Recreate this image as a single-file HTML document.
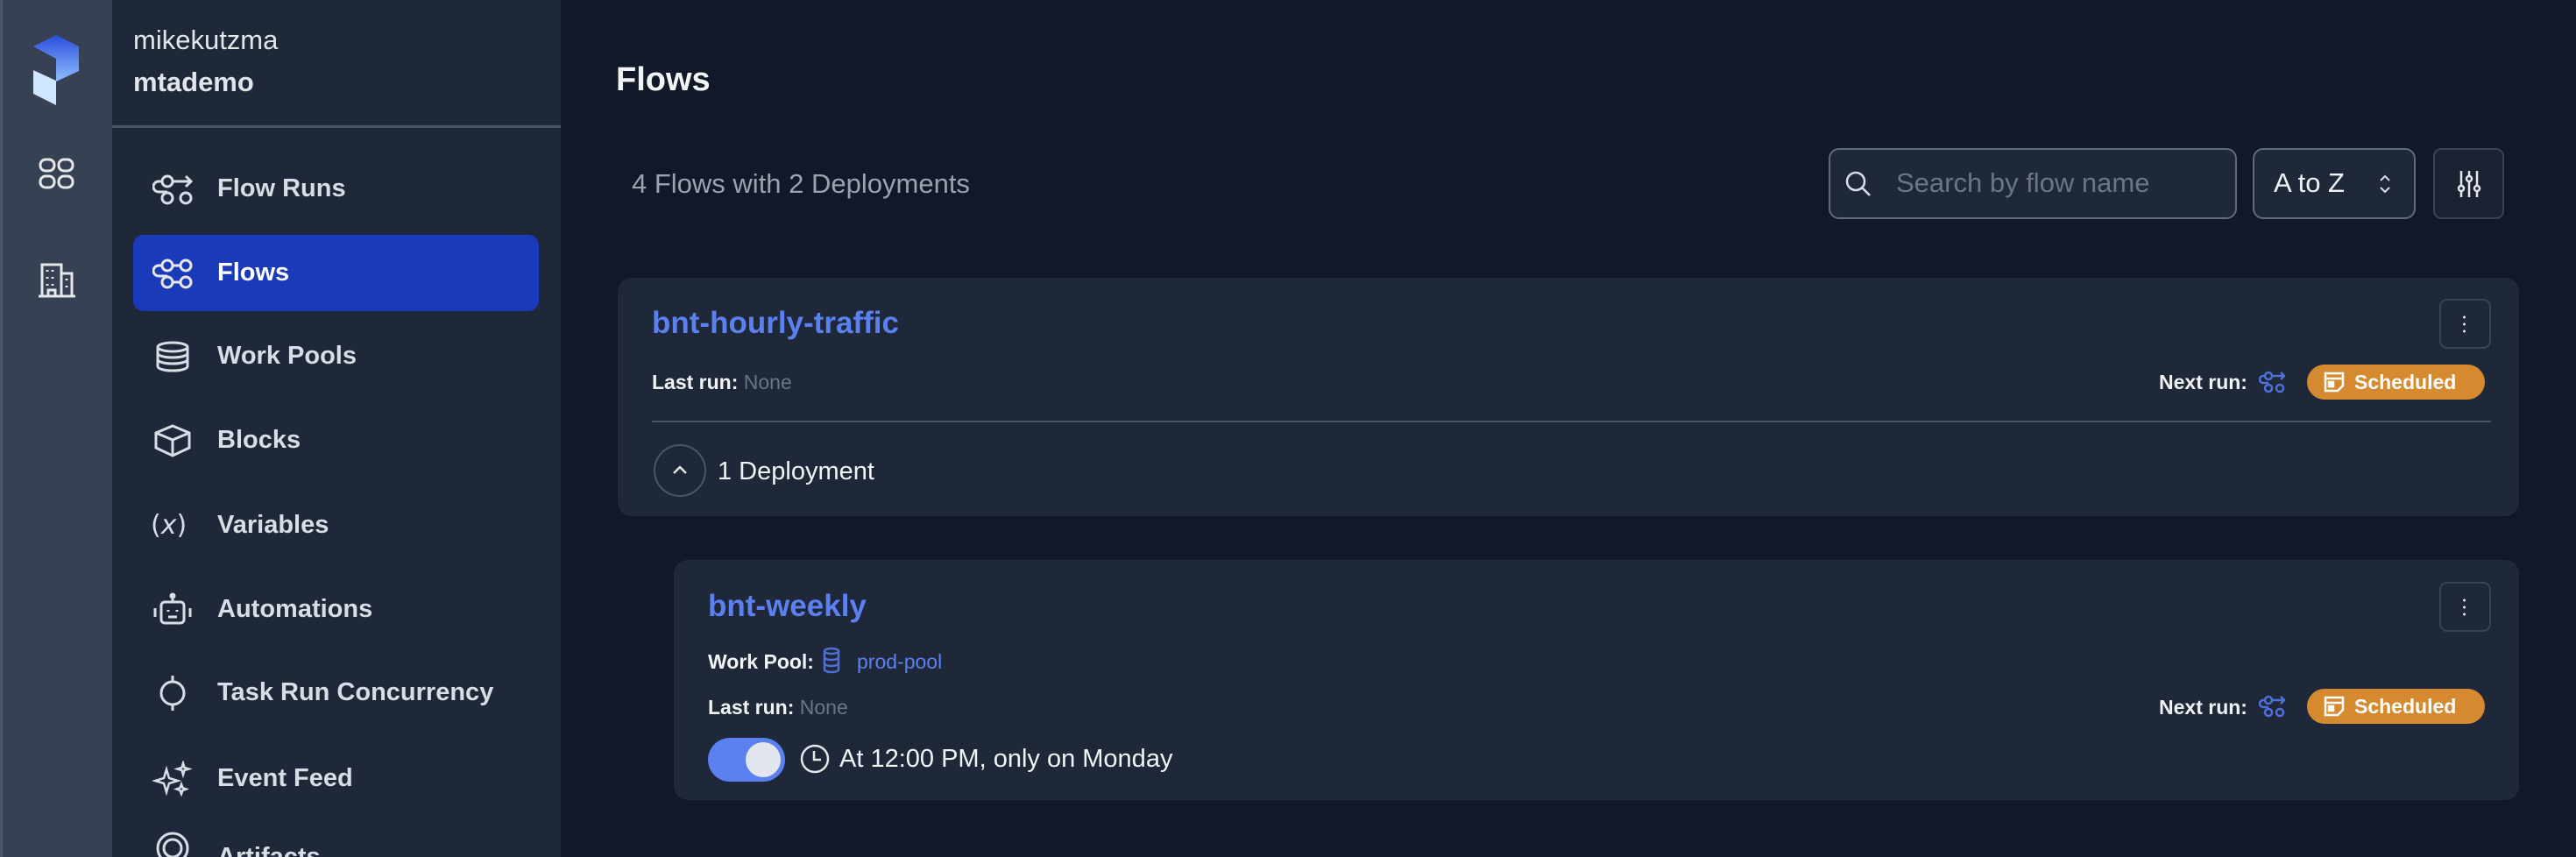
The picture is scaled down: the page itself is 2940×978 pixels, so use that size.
<!DOCTYPE html>
<html><head><meta charset="utf-8"><style>
*{box-sizing:border-box;margin:0;padding:0}
html,body{width:2940px;height:978px;overflow:hidden}
body{background:#111827;font-family:"Liberation Sans",sans-serif;color:#e5e7eb}
#wrap{position:relative;width:2940px;height:978px;overflow:hidden}
.rail{position:absolute;left:0;top:0;width:128px;height:978px;background:#364153;border-left:3px solid #4b5567}
.side{position:absolute;left:128px;top:0;width:512px;height:978px;background:#1f2839}
.abs{position:absolute}
.nav{position:absolute;left:152px;width:463px;height:87px;display:flex;align-items:center;font-size:29px;font-weight:bold;color:#d8dde6}
.nav svg{position:absolute;left:22px}
.nav span{position:absolute;left:96px}
.card{position:absolute;background:#1f2839;border-radius:16px}
.btn{position:absolute;border:2px solid #374357;border-radius:9px}
.badge{position:absolute;background:#d68a30;border-radius:20px;color:#fff;font-weight:bold;font-size:23px;display:flex;align-items:center}
.lbl{font-size:23px;color:#f1f3f6;font-weight:bold}
.muted{color:#6b7585;font-weight:normal}
</style></head><body><div id="wrap">
<div class="rail"></div>
<svg class="abs" style="left:0;top:0" width="128" height="140">
<defs><linearGradient id="g" x1="0" y1="0" x2="0" y2="1"><stop offset="0" stop-color="#2a4fdc"/><stop offset="1" stop-color="#8fbcff"/></linearGradient></defs>
<polygon points="38,53 64,40 90,53 90,81 64,93 64,67" fill="url(#g)"/>
<polygon points="38,80 64,92 64,120 38,107" fill="#cfe6ff"/>
</svg>
<svg class="abs" style="left:44px;top:180px" width="42" height="38" fill="none" stroke="#e5e7eb" stroke-width="3"><rect x="2" y="2" width="16" height="13" rx="6"/><rect x="23" y="2" width="16" height="13" rx="6"/><rect x="2" y="21" width="16" height="13" rx="6"/><rect x="23" y="21" width="16" height="13" rx="6"/></svg>
<svg class="abs" style="left:42px;top:298px" width="46" height="42" fill="none" stroke="#e5e7eb" stroke-width="3"><path d="M2 40h42M6 40V4h22v36M28 14h12v26M12 10v2M18 10v2M12 18v2M18 18v2M12 26v2M18 26v2M34 20v2M34 28v2M13 40v-7h8v7"/></svg>
<div class="side"></div>
<div class="abs" style="left:152px;top:28px;font-size:31px;color:#e2e6ec">mikekutzma</div>
<div class="abs" style="left:152px;top:76px;font-size:31px;font-weight:bold;color:#e2e6ec">mtademo</div>
<div class="abs" style="left:128px;top:143px;width:512px;height:3px;background:#4a5567"></div>

<div class="nav" style="top:172px"><svg width="46" height="36" fill="none" stroke="#d8dde6" stroke-width="3"><circle cx="17" cy="9" r="6"/><circle cx="17" cy="28" r="6"/><circle cx="38" cy="28" r="6"/><path d="M23 9h20M38 3l6 6-6 6M11 9H7a6 6 0 0 0 0 12h10"/></svg><span>Flow Runs</span></div>
<div class="nav" style="top:268px;background:#1b3ab9;border-radius:12px;color:#fff"><svg width="46" height="36" fill="none" stroke="#e5e7eb" stroke-width="3"><circle cx="17" cy="9" r="6"/><circle cx="17" cy="28" r="6"/><circle cx="38" cy="28" r="6"/><circle cx="38" cy="9" r="6"/><path d="M23 9h9M23 28h9M11 9H7a6 6 0 0 0 0 12h10"/></svg><span>Flows</span></div>
<div class="nav" style="top:363px"><svg width="46" height="36" fill="none" stroke="#d8dde6" stroke-width="3"><ellipse cx="23" cy="7" rx="17" ry="5"/><path d="M6 7v22c0 3 8 5 17 5s17-2 17-5V7M6 14c0 3 8 5 17 5s17-2 17-5M6 21c0 3 8 5 17 5s17-2 17-5"/></svg><span>Work Pools</span></div>
<div class="nav" style="top:459px"><svg width="46" height="40" fill="none" stroke="#d8dde6" stroke-width="3"><path d="M23 3l19 8v17l-19 9-19-9V11zM4 11l19 8 19-8M23 19v18"/></svg><span>Blocks</span></div>
<div class="nav" style="top:556px"><span style="left:20px;font-weight:normal;font-family:'DejaVu Sans',sans-serif;font-size:30px">(<i>x</i>)</span><span>Variables</span></div>
<div class="nav" style="top:652px"><svg width="46" height="40" fill="none" stroke="#d8dde6" stroke-width="3"><circle cx="23" cy="4" r="2" fill="#d8dde6"/><path d="M23 6v5"/><rect x="10" y="11" width="26" height="24" rx="4"/><path d="M3 18v10M43 18v10M18 20v2M28 20v2M18 28h10"/></svg><span>Automations</span></div>
<div class="nav" style="top:747px"><svg width="46" height="42" fill="none" stroke="#d8dde6" stroke-width="3"><circle cx="23" cy="21" r="13"/><path d="M23 1v7M23 34v7"/></svg><span>Task Run Concurrency</span></div>
<div class="nav" style="top:845px"><svg width="46" height="42" fill="none" stroke="#d8dde6" stroke-width="2.5"><path d="M16 10l3 10 10 3-10 3-3 10-3-10-10-3 10-3zM35 3l1.5 5 5 1.5-5 1.5L35 16l-1.5-5-5-1.5 5-1.5zM33 27l1.5 4 4 1.5-4 1.5L33 38l-1.5-4-4-1.5 4-1.5z"/></svg><span>Event Feed</span></div>
<div class="nav" style="top:940px;height:38px;align-items:flex-start;overflow:hidden"><svg style="top:6px" width="46" height="40" fill="none" stroke="#d8dde6" stroke-width="3"><circle cx="23" cy="22" r="17"/><circle cx="23" cy="22" r="10"/></svg><span style="top:22px">Artifacts</span></div>

<div class="abs" style="left:703px;top:70px;font-size:38px;font-weight:bold;color:#f3f4f6">Flows</div>
<div class="abs" style="left:721px;top:192px;font-size:31px;color:#9ca3af">4 Flows with 2 Deployments</div>

<div class="abs" style="left:2087px;top:169px;width:466px;height:81px;border:2px solid #5f6b7e;border-radius:12px;background:#1f2839"></div>
<svg class="abs" style="left:2104px;top:193px" width="34" height="34" fill="none" stroke="#d8dde6" stroke-width="2.5"><circle cx="14" cy="14" r="10"/><path d="M21 21l9 9"/></svg>
<div class="abs" style="left:2164px;top:191px;font-size:31px;color:#6b7585">Search by flow name</div>
<div class="abs" style="left:2571px;top:169px;width:186px;height:81px;border:2px solid #5f6b7e;border-radius:12px;background:#1f2839"></div>
<div class="abs" style="left:2595px;top:191px;font-size:31px;color:#f1f3f6">A to Z</div>
<svg class="abs" style="left:2714px;top:197px" width="16" height="26" fill="none" stroke="#d8dde6" stroke-width="2"><path d="M3 9l5-5 5 5M3 17l5 5 5-5"/></svg>
<div class="btn" style="left:2777px;top:169px;width:81px;height:81px;border-color:#374357;background:#1b2333"></div>
<svg class="abs" style="left:2803px;top:193px" width="30" height="34" fill="none" stroke="#e5e7eb" stroke-width="2.5"><path d="M6 2v30M15 2v30M24 2v30"/><circle cx="6" cy="22" r="3" fill="#1b2333"/><circle cx="15" cy="11" r="3" fill="#1b2333"/><circle cx="24" cy="22" r="3" fill="#1b2333"/></svg>

<div class="card" style="left:705px;top:317px;width:2170px;height:272px"></div>
<div class="abs" style="left:744px;top:349px;font-size:35px;font-weight:bold;color:#5b80f0">bnt-hourly-traffic</div>
<div class="abs lbl" style="left:744px;top:423px">Last run: <span class="muted">None</span></div>
<div class="btn" style="left:2784px;top:341px;width:59px;height:57px"></div>
<div class="abs" style="left:2811px;top:358px;width:3px;height:24px;background:radial-gradient(circle,#e5e7eb 1.3px,transparent 1.6px) 0 0/3px 8px"></div>
<div class="abs lbl" style="left:2464px;top:423px">Next run:</div>
<svg class="abs" style="left:2578px;top:422px" width="30" height="28" fill="none" stroke="#4f6fd9" stroke-width="2.5"><circle cx="11" cy="7" r="4"/><circle cx="11" cy="21" r="4"/><circle cx="24" cy="21" r="4"/><path d="M15 7h13M25 3l4 4-4 4M7 7H5a4 4 0 0 0 0 8h6"/></svg>
<div class="badge" style="left:2633px;top:416px;width:203px;height:40px"><svg style="margin-left:18px" width="26" height="26" fill="none" stroke="#fff" stroke-width="2.5"><path d="M3 3h20v14l-6 6H3zM3 9h20"/><rect x="7" y="13" width="5" height="5" fill="#fff"/></svg><span style="margin-left:10px">Scheduled</span></div>
<div class="abs" style="left:744px;top:480px;width:2099px;height:2px;background:#4a5567"></div>
<div class="abs" style="left:746px;top:507px;width:60px;height:60px;border:2px solid #4a5567;border-radius:50%"></div>
<svg class="abs" style="left:766px;top:530px" width="20" height="14" fill="none" stroke="#e5e7eb" stroke-width="2.5"><path d="M3 10l7-7 7 7"/></svg>
<div class="abs" style="left:819px;top:522px;font-size:29px;color:#f1f3f6">1 Deployment</div>

<div class="card" style="left:769px;top:639px;width:2106px;height:274px"></div>
<div class="abs" style="left:808px;top:672px;font-size:35px;font-weight:bold;color:#5b80f0">bnt-weekly</div>
<div class="abs lbl" style="left:808px;top:742px">Work Pool:</div>
<svg class="abs" style="left:938px;top:738px" width="22" height="32" fill="none" stroke="#4f6fd9" stroke-width="2.5"><ellipse cx="11" cy="5" rx="8" ry="3"/><path d="M3 5v21c0 2 4 3 8 3s8-1 8-3V5M3 12c0 2 4 3 8 3s8-1 8-3M3 19c0 2 4 3 8 3s8-1 8-3"/></svg>
<div class="abs" style="left:978px;top:742px;font-size:23px;color:#5b80f0">prod-pool</div>
<div class="abs lbl" style="left:808px;top:794px">Last run: <span class="muted">None</span></div>
<div class="btn" style="left:2784px;top:664px;width:59px;height:57px"></div>
<div class="abs" style="left:2811px;top:681px;width:3px;height:24px;background:radial-gradient(circle,#e5e7eb 1.3px,transparent 1.6px) 0 0/3px 8px"></div>
<div class="abs lbl" style="left:2464px;top:794px">Next run:</div>
<svg class="abs" style="left:2578px;top:792px" width="30" height="28" fill="none" stroke="#4f6fd9" stroke-width="2.5"><circle cx="11" cy="7" r="4"/><circle cx="11" cy="21" r="4"/><circle cx="24" cy="21" r="4"/><path d="M15 7h13M25 3l4 4-4 4M7 7H5a4 4 0 0 0 0 8h6"/></svg>
<div class="badge" style="left:2633px;top:786px;width:203px;height:40px"><svg style="margin-left:18px" width="26" height="26" fill="none" stroke="#fff" stroke-width="2.5"><path d="M3 3h20v14l-6 6H3zM3 9h20"/><rect x="7" y="13" width="5" height="5" fill="#fff"/></svg><span style="margin-left:10px">Scheduled</span></div>
<div class="abs" style="left:808px;top:842px;width:88px;height:50px;border-radius:25px;background:#5b80f0"></div>
<div class="abs" style="left:851px;top:847px;width:40px;height:40px;border-radius:50%;background:#e2e6ee"></div>
<svg class="abs" style="left:912px;top:848px" width="36" height="36" fill="none" stroke="#e5e7eb" stroke-width="2.5"><circle cx="18" cy="18" r="15"/><path d="M17 9v10h8"/></svg>
<div class="abs" style="left:958px;top:850px;font-size:29px;color:#f1f3f6">At 12:00 PM, only on Monday</div>
</div></body></html>
